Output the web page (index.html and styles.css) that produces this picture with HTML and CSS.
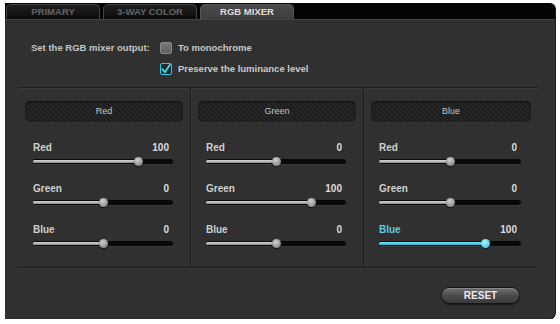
FILE: index.html
```html
<!DOCTYPE html>
<html>
<head>
<meta charset="utf-8">
<link rel="stylesheet" href="styles.css">
</head>
<body>
<div class="win">
  <div class="tabs">
    <div class="tab">PRIMARY</div>
    <div class="tab">3-WAY COLOR</div>
    <div class="tab active">RGB MIXER</div>
  </div>
  <div class="body">
    <div class="opts">
      <div class="opt-label">Set the RGB mixer output:</div>
      <label class="chk"><span class="box"></span><span>To monochrome</span></label>
      <label class="chk row2"><span class="box on"><svg viewBox="0 0 12 12" width="12" height="12"><path d="M2.3 6.2 L5 9.2 L10 1.6" fill="none" stroke="#3fd4ec" stroke-width="1.9" stroke-linecap="round" stroke-linejoin="round"/></svg></span><span>Preserve the luminance level</span></label>
    </div>

    <div class="mixer">
      <div class="col">
        <div class="head">Red</div>
        <div class="row"><div class="lv"><span>Red</span><span class="val">100</span></div><div class="slider" style="--p:75%"><div class="fill"></div><div class="knob"></div></div></div>
        <div class="row"><div class="lv"><span>Green</span><span class="val">0</span></div><div class="slider" style="--p:50%"><div class="fill"></div><div class="knob"></div></div></div>
        <div class="row"><div class="lv"><span>Blue</span><span class="val">0</span></div><div class="slider" style="--p:50%"><div class="fill"></div><div class="knob"></div></div></div>
      </div>
      <div class="col">
        <div class="head">Green</div>
        <div class="row"><div class="lv"><span>Red</span><span class="val">0</span></div><div class="slider" style="--p:50%"><div class="fill"></div><div class="knob"></div></div></div>
        <div class="row"><div class="lv"><span>Green</span><span class="val">100</span></div><div class="slider" style="--p:75%"><div class="fill"></div><div class="knob"></div></div></div>
        <div class="row"><div class="lv"><span>Blue</span><span class="val">0</span></div><div class="slider" style="--p:50%"><div class="fill"></div><div class="knob"></div></div></div>
      </div>
      <div class="col last">
        <div class="head">Blue</div>
        <div class="row"><div class="lv"><span>Red</span><span class="val">0</span></div><div class="slider" style="--p:50%"><div class="fill"></div><div class="knob"></div></div></div>
        <div class="row"><div class="lv"><span>Green</span><span class="val">0</span></div><div class="slider" style="--p:50%"><div class="fill"></div><div class="knob"></div></div></div>
        <div class="row sel"><div class="lv"><span class="lbl">Blue</span><span class="val">100</span></div><div class="slider" style="--p:75%"><div class="fill"></div><div class="knob"></div></div></div>
      </div>
    </div>

    <div class="foot">
      <button class="reset">RESET</button>
    </div>
  </div>
</div>
</body>
</html>
```

FILE: styles.css
```css
* { box-sizing: border-box; }
html, body { margin: 0; padding: 0; background: #ffffff; }
body { font-family: "Liberation Sans", Arial, sans-serif; }

.win {
  margin: 3px 0 0 5px;
  width: 550px;
  height: 316px;
  background: #303030;
  border-radius: 0 6px 6px 0;
  display: flex;
  flex-direction: column;
  box-shadow: 1px 0 0 #1a1a1a, 0 1px 0 #1a1a1a;
}

.tabs {
  height: 16px;
  background: #050505;
  border-radius: 0 6px 0 0;
  display: flex;
  align-items: flex-end;
  gap: 3px;
  padding-left: 1px;
}
.tab {
  width: 94px;
  height: 15px;
  border: 1px solid #444;
  border-bottom: none;
  border-radius: 5px 5px 0 0;
  background: linear-gradient(#1f1f1f, #0b0b0b);
  color: #646464;
  font-size: 9.5px;
  font-weight: bold;
  line-height: 14px;
  text-align: center;
}
.tab.active {
  background: linear-gradient(#4a4a4a, #3d3d3d);
  border-color: #575757;
  color: #dedede;
}

.body {
  flex: 1;
  border-top: 1px solid #444;
  display: flex;
  flex-direction: column;
}

.opts {
  padding: 21px 0 0 26px;
  display: grid;
  grid-template-columns: 129px auto;
  grid-auto-rows: 13px;
  row-gap: 8px;
  align-items: center;
  color: #c9c9c9;
  font-size: 9.5px;
  font-weight: bold;
}
.opt-label { color: #c4c4c4; }
.chk { display: flex; align-items: center; gap: 6px; }
.chk.row2 { grid-column: 2; }
.box {
  width: 12px;
  height: 12px;
  border-radius: 2px;
  background: linear-gradient(#7a7a7a, #5e5e5e);
  border: 1px solid #8a8a8a;
  display: block;
}
.box.on {
  background: #1f2a2d;
  border: 1px solid #36c6e0;
  position: relative;
}
.box.on svg { position: absolute; left: -1px; top: -1px; }

.mixer {
  margin: 12px 0 0 13px;
  width: 520px;
  display: flex;
  border-top: 1px solid #1d1d1d;
  border-bottom: 1px solid #1d1d1d;
  box-shadow: inset 0 1px 0 #393939, 0 1px 0 #393939;
}
.col {
  flex: 0 0 173px;
  padding: 13px 0 2px;
  border-right: 1px solid #1c1c1c;
  box-shadow: 1px 0 0 #3a3a3a;
}
.col.last { flex: 1 1 auto; border-right: none; box-shadow: none; }

.head {
  margin: 0 7px;
  height: 21px;
  border-radius: 5px;
  background: repeating-linear-gradient(45deg, #1e1e1e 0 2px, #272727 2px 3.5px);
  box-shadow: inset 0 1px 2px rgba(0,0,0,0.5), 0 1px 0 #363636;
  color: #c2c2c2;
  font-size: 9px;
  line-height: 21px;
  text-align: center;
}

.row { height: 41px; padding: 0 17px 0 15px; }
.head + .row { margin-top: 20px; }
.lv {
  display: flex;
  justify-content: space-between;
  height: 12px;
  line-height: 12px;
  font-size: 10px;
  font-weight: bold;
  color: #cfcfcf;
}
.val { padding-right: 4px; color: #dcdcdc; }

.slider {
  position: relative;
  height: 5px;
  margin-top: 5px;
  border-radius: 3px;
  background: #090909;
  box-shadow: 0 1px 0 #3a3a3a;
}
.fill {
  position: absolute;
  left: 0;
  top: 1px;
  height: 3px;
  width: var(--p);
  border-radius: 2px;
  background: linear-gradient(#dcdcdc, #8a8a8a);
}
.knob {
  position: absolute;
  left: var(--p);
  top: 50%;
  width: 9px;
  height: 9px;
  margin: -4.5px 0 0 -4.5px;
  border-radius: 50%;
  background: radial-gradient(circle at 40% 35%, #d0d0d0, #8c8c8c 70%);
  box-shadow: 0 1px 1px rgba(0,0,0,0.6);
}
.row.sel .lbl { color: #5ccbe2; }
.row.sel .fill { background: linear-gradient(#7ee4f4, #26b6d6); }
.row.sel .knob { background: radial-gradient(circle at 40% 35%, #b6f0fa, #4cc8e2 70%); }

.foot {
  display: flex;
  justify-content: flex-end;
  padding: 19px 35px 0 0;
}
.reset {
  width: 79px;
  height: 17px;
  border-radius: 9px;
  border: 1px solid #151515;
  background: linear-gradient(#727272, #4a4a4a 50%, #3a3a3a);
  box-shadow: inset 0 1px 0 #888, 0 1px 1px rgba(0,0,0,0.5);
  color: #ececec;
  font-family: "Liberation Sans", Arial, sans-serif;
  font-size: 10px;
  font-weight: bold;
  line-height: 15px;
  padding: 0;
  text-align: center;
}
```
